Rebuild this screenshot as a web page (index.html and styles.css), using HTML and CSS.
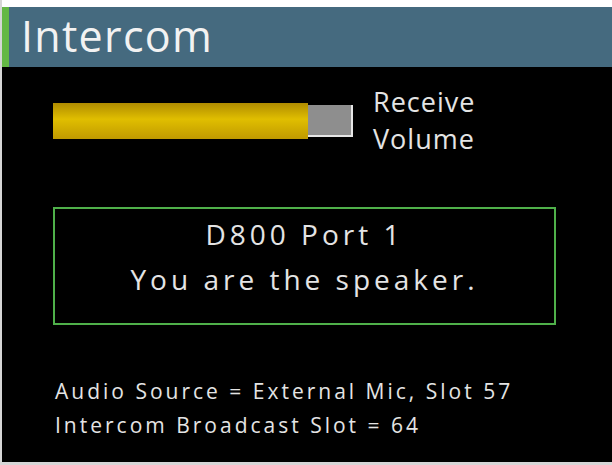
FILE: index.html
```html
<!DOCTYPE html>
<html lang="en">
<head>
    <meta charset="UTF-8">
    <title>Intercom</title>
    <link rel="stylesheet" href="styles.css">
</head>
<body>
    <div class="screen">
        <div class="header">
            <h1>Intercom</h1>
        </div>
        <div class="panel">
            <div class="volume">
                <div class="bar">
                    <div class="level" style="width: 85%"></div>
                    <div class="rest"></div>
                </div>
                <div class="volume-label">Receive<br>Volume</div>
            </div>

            <div class="status">
                <p>D800 Port 1</p>
                <p>You are the speaker.</p>
            </div>

            <div class="info">
                <p>Audio Source = External Mic, Slot 57</p>
                <p>Intercom Broadcast Slot = 64</p>
            </div>
        </div>
    </div>
</body>
</html>
```

FILE: styles.css
```css
body {
    margin: 0;
    background: #fff;
    font-family: "Open Sans", "Noto Sans", sans-serif;
}
.screen {
    width: 612px;
    height: 465px;
    padding-top: 7px;
    box-sizing: border-box;
    display: flex;
    flex-direction: column;
    border-left: 2px solid #d6d6d6;
    border-bottom: 3px solid #d6d6d6;
}
.header {
    height: 60px;
    background: #456a7f;
    border-left: 7px solid #64b845;
    display: flex;
    align-items: center;
    padding-left: 12px;
}
h1 {
    margin: 0;
    color: #f2f2f2;
    font-weight: normal;
    font-size: 43px;
    letter-spacing: 1.3px;
    line-height: 1;
    margin-top: -4px;
}
.panel {
    flex: 1;
    background: #000;
    padding: 0 0 0 51px;
    color: #e4e4e4;
}
.volume {
    display: flex;
    align-items: center;
    margin-top: 18px;
}
.bar {
    width: 300px;
    height: 36px;
    display: flex;
    align-items: center;
}
.level {
    height: 36px;
    background: linear-gradient(#b08c00, #e0be00 45%, #c09a00);
}
.rest {
    flex: 1;
    height: 32px;
    background: #8e8e8e;
    border-right: 2px solid #e6e6e6;
    border-bottom: 2px solid #e6e6e6;
    box-sizing: border-box;
}
.volume-label {
    margin-left: 20px;
    font-size: 27px;
    letter-spacing: 1px;
    line-height: 37px;
    margin-top: -2px;
}
.status {
    width: 503px;
    height: 118px;
    box-sizing: border-box;
    margin-top: 50px;
    border: 2px solid #4fb04a;
    text-align: center;
    font-size: 28px;
    letter-spacing: 4px;
    padding-top: 3px;
}
.status p {
    margin: 0;
    line-height: 45px;
}
.info {
    margin-top: 49px;
    padding-left: 2px;
    font-size: 21px;
    letter-spacing: 3px;
}
.info p {
    margin: 0;
    line-height: 34px;
}
```
